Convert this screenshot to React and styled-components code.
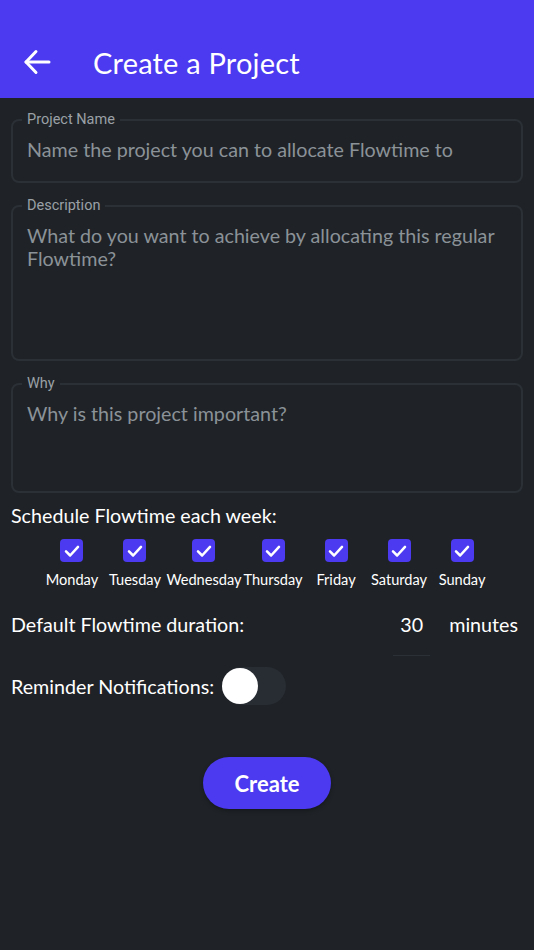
import styled, { createGlobalStyle } from 'styled-components'

const GlobalStyle = createGlobalStyle`
  html, body {
    margin: 0;
    padding: 0;
    background: #1f2327;
  }
  body {
    font-family: Lato, "Noto Sans", sans-serif;
    color: #ffffff;
  }
  * { box-sizing: border-box; }
`

const Page = styled.div`
  width: 534px;
  min-height: 950px;
  background: #1f2327;
`

const Header = styled.header`
  height: 98px;
  background: #4b3aef;
  display: flex;
  align-items: center;
  padding: 26px 0 0 22px;
`

const BackButton = styled.button`
  background: none;
  border: none;
  padding: 0;
  width: 30px;
  height: 30px;
  display: flex;
  align-items: center;
  justify-content: center;
  cursor: pointer;
`

const Title = styled.h1`
  margin: 0 0 0 41px;
  font-size: 29px;
  font-weight: 400;
  letter-spacing: 0.2px;
  color: #ffffff;
`

const Form = styled.div`
  padding: 15px 11px 0 11px;
  display: flex;
  flex-direction: column;
`

const Field = styled.fieldset`
  margin: 0 0 16px 0;
  padding: 0 14px;
  border: 2px solid #2b3036;
  border-radius: 8px;
  height: ${p => p.h}px;
  min-width: 0;
`

const Legend = styled.legend`
  padding: 0 5px;
  margin-left: -5px;
  font-family: Roboto, "Noto Sans", sans-serif;
  font-size: 14.5px;
  color: #9aa0a6;
  line-height: 14px;
`

const Placeholder = styled.div`
  margin-top: 11px;
  font-size: 19.7px;
  line-height: 23px;
  color: #8b9298;
`

const SectionLabel = styled.div`
  font-size: 19.7px;
  color: #ffffff;
  margin-top: ${p => p.mt || 0}px;
`

const Days = styled.div`
  display: flex;
  justify-content: center;
  margin-top: 12px;
`

const Day = styled.label`
  min-width: 63px;
  display: flex;
  flex-direction: column;
  align-items: center;
  gap: 9px;
  white-space: nowrap;
  font-size: 14.6px;
  color: #ffffff;
`

const Check = styled.span`
  width: 23px;
  height: 23px;
  border-radius: 4px;
  background: #4b3aef;
  display: flex;
  align-items: center;
  justify-content: center;
`

const DurationRow = styled.div`
  display: flex;
  align-items: center;
  margin-top: 24px;
  height: 24px;
`

const Grow = styled.div`
  flex: 1;
  font-size: 19.7px;
`

const Minutes = styled.div`
  position: relative;
  width: 37px;
  text-align: center;
  font-size: 19.7px;
  margin-right: 19px;
  &::after {
    content: '';
    position: absolute;
    left: 0;
    right: 0;
    top: 42px;
    height: 1px;
    background: #2b3036;
  }
`

const Unit = styled.div`
  font-size: 19.7px;
  margin-right: 5px;
`

const ReminderRow = styled.div`
  display: flex;
  align-items: center;
  gap: 8px;
  margin-top: 31px;
`

const Track = styled.span`
  position: relative;
  width: 64px;
  height: 38px;
  border-radius: 19px;
  background: #282c33;
  display: inline-block;
`

const Thumb = styled.span`
  position: absolute;
  left: 0;
  top: 1px;
  width: 36px;
  height: 36px;
  border-radius: 50%;
  background: #ffffff;
`

const CreateButton = styled.button`
  align-self: center;
  margin-top: 52px;
  width: 128px;
  height: 52px;
  border: none;
  border-radius: 26px;
  background: #4b3aef;
  color: #ffffff;
  font-family: Lato, "Noto Sans", sans-serif;
  font-weight: 700;
  font-size: 22px;
  box-shadow: 0 2px 4px rgba(0, 0, 0, 0.3);
`

const days = ['Monday', 'Tuesday', 'Wednesday', 'Thursday', 'Friday', 'Saturday', 'Sunday']

export default function App() {
  return (
    <Page>
      <GlobalStyle />
      <Header>
        <BackButton aria-label="Back">
          <svg width="28" height="26" viewBox="0 0 28 26" fill="none" stroke="#fff" strokeWidth="3" strokeLinecap="round" strokeLinejoin="round">
            <path d="M3 13 H26" />
            <path d="M13 2.5 L3 13 L13 23.5" />
          </svg>
        </BackButton>
        <Title>Create a Project</Title>
      </Header>
      <Form>
        <Field h={70}>
          <Legend>Project Name</Legend>
          <Placeholder>Name the project you can to allocate Flowtime to</Placeholder>
        </Field>
        <Field h={162}>
          <Legend>Description</Legend>
          <Placeholder>What do you want to achieve by allocating this regular Flowtime?</Placeholder>
        </Field>
        <Field h={116}>
          <Legend>Why</Legend>
          <Placeholder>Why is this project important?</Placeholder>
        </Field>
        <SectionLabel mt={-5}>Schedule Flowtime each week:</SectionLabel>
        <Days>
          {days.map(d => (
            <Day key={d}>
              <Check>
                <svg width="18" height="18" viewBox="0 0 24 24" fill="none" stroke="#fff" strokeWidth="3.4" strokeLinecap="round" strokeLinejoin="round">
                  <path d="M4 12.5 L9.5 18 L20 6.5" />
                </svg>
              </Check>
              {d}
            </Day>
          ))}
        </Days>
        <DurationRow>
          <Grow>Default Flowtime duration:</Grow>
          <Minutes>30</Minutes>
          <Unit>minutes</Unit>
        </DurationRow>
        <ReminderRow>
          <SectionLabel>Reminder Notifications:</SectionLabel>
          <Track><Thumb /></Track>
        </ReminderRow>
        <CreateButton>Create</CreateButton>
      </Form>
    </Page>
  )
}
